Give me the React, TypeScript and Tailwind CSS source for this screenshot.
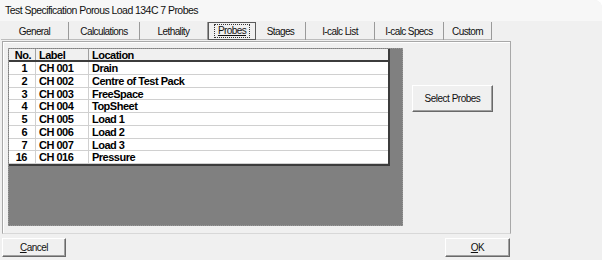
import React from "react";

const tabs = [
	{ label: "General", w: "w-[68px]" },
	{ label: "Calculations", w: "w-[71px]" },
	{ label: "Lethality", w: "w-[68px]" },
	{ label: "Probes", w: "w-[48px]", active: true },
	{ label: "Stages", w: "w-[50px]" },
	{ label: "I-calc List", w: "w-[69px]" },
	{ label: "I-calc Specs", w: "w-[69px]" },
	{ label: "Custom", w: "w-[48px]" },
];

const probes = [
	{ no: "1", label: "CH 001", location: "Drain" },
	{ no: "2", label: "CH 002", location: "Centre of Test Pack" },
	{ no: "3", label: "CH 003", location: "FreeSpace" },
	{ no: "4", label: "CH 004", location: "TopSheet" },
	{ no: "5", label: "CH 005", location: "Load 1" },
	{ no: "6", label: "CH 006", location: "Load 2" },
	{ no: "7", label: "CH 007", location: "Load 3" },
	{ no: "16", label: "CH 016", location: "Pressure" },
];

function WinButton({ children, className }: { children: React.ReactNode; className: string }) {
	return (
		<div
			className={`flex items-center justify-center bg-[#f0f0f0] border border-t-white border-l-white border-b-[#696969] border-r-[#696969] shadow-[inset_-1px_-1px_0_#a0a0a0] text-[10px] tracking-[-0.5px] text-[#111] ${className}`}
		>
			{children}
		</div>
	);
}

export default function App() {
	return (
		<div className="w-[602px] h-[260px] bg-[#f0f0f0] overflow-hidden rounded-tr-[8px] font-['Liberation_Sans',Arial,sans-serif] text-black">
			<div className="h-[21px] bg-[#f7f7f7] pl-[5px] text-[10.5px] tracking-[-0.55px] leading-[21px] text-[#111]">
				Test Specification Porous Load 134C 7 Probes
			</div>

			<div className="flex h-[18px] ml-[1px] mt-[1px]">
				{tabs.map((t) => (
					<div
						key={t.label}
						className={`${t.w} h-full flex items-center justify-center text-[10px] tracking-[-0.6px] text-[#111] ${
							t.active
								? "border border-[#5a5a5a] bg-[#f0f0f0]"
								: "border-r border-r-[#9a9a9a] shadow-[inset_0_-1px_0_#bdbdbd]"
						}`}
					>
						{t.active ? (
							<span className="border border-dotted border-[#333] px-[3px] leading-[12px] underline">{t.label}</span>
						) : (
							t.label
						)}
					</div>
				))}
			</div>

			<div className="ml-[2px] mt-[1px] w-[509px] h-[193px] border border-[#a8a8a8] border-b-[#d8d8d8] shadow-[inset_1px_1px_0_#fff] flex items-start pt-[6px] pl-[5px]">
				<div className="w-[395px] h-[178px] bg-[#808080] border border-dotted border-[#9a9a9a]">
					<div className="w-[381px] bg-white border-r-2 border-b-2 border-r-[#3c3c3c] border-b-[#3c3c3c] text-[11px] tracking-[-0.5px] font-bold">
						<div className="flex h-[13px] bg-[#f0f0f0] border-b-2 border-b-[#3c3c3c] leading-[12px]">
							<div className="w-[27px] border-r border-[#a0a0a0] text-right pr-[4px]">No.</div>
							<div className="w-[53px] border-r border-[#a0a0a0] pl-[3px]">Label</div>
							<div className="flex-1 pl-[3px]">Location</div>
						</div>
						{probes.map((p) => (
							<div key={p.no} className="flex h-[12.75px] border-b border-b-[#d0d0d0] leading-[12px]">
								<div className="w-[27px] border-r border-[#d0d0d0] text-right pr-[8px]">{p.no}</div>
								<div className="w-[53px] border-r border-[#d0d0d0] pl-[3px]">{p.label}</div>
								<div className="flex-1 pl-[3px]">{p.location}</div>
							</div>
						))}
					</div>
				</div>
				<WinButton className="ml-[9px] mt-[37px] w-[81px] h-[27px]">Select Probes</WinButton>
			</div>

			<div className="flex justify-between w-[508px] ml-[2px] mt-[4px]">
				<WinButton className="w-[64px] h-[19px]">
					<span>
						<span className="underline">C</span>ancel
					</span>
				</WinButton>
				<WinButton className="w-[65px] h-[19px]">
					<span>
						<span className="underline">O</span>K
					</span>
				</WinButton>
			</div>
		</div>
	);
}
